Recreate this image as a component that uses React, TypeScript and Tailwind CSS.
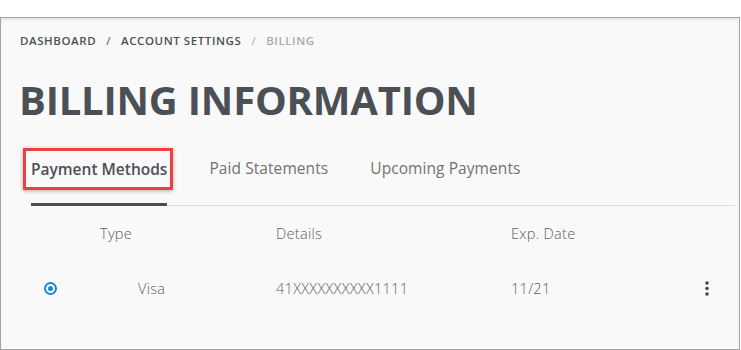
const font = { fontFamily: '"Open Sans", "DejaVu Sans", sans-serif' };

export default function App() {
  return (
    <div className="h-[350px] w-[741px] bg-white pt-[17px]" style={font}>
      <div className="h-[333px] w-[740px] border border-[#a3a3a3] bg-[#f9f9f9] shadow-[inset_0_3px_4px_-2px_rgba(0,0,0,0.12)]">
        {/* Breadcrumb */}
        <nav className="flex items-center pl-[19px] pt-[14px] text-[11.5px] font-semibold leading-[17px] tracking-[0.05em] text-[#4b5057]">
          <span>DASHBOARD</span>
          <span className="mx-[10px] font-normal">/</span>
          <span>ACCOUNT SETTINGS</span>
          <span className="ml-[10px] mr-[10px] font-normal text-[#aaaaaa]">/</span>
          <span className="text-[#aaaaaa]">BILLING</span>
        </nav>

        <h1 className="mt-[31px] pl-[18px] text-[40px] font-bold leading-[40px] tracking-[-0.005em] text-[#4b5057]">
          BILLING INFORMATION
        </h1>

        {/* Tabs */}
        <div className="ml-[30px] mr-[4px] mt-[30px] flex border-b border-[#dddddd]">
          <div className="relative -mb-px border-b-[3px] border-[#4b5057] pb-[22px] pt-[7px]">
            <span className="text-[15.5px] font-semibold leading-[23px] text-[#4b5057]">Payment Methods</span>
            <div className="absolute -left-[8px] -right-[6px] -top-[2px] bottom-[13px] border-[3px] border-[#ef4040] shadow-[0_1px_4px_rgba(0,0,0,0.3)]" />
          </div>
          <div className="ml-[42px] pt-[7px] text-[15.5px] leading-[23px] tracking-[0.005em] text-[#727272]">Paid Statements</div>
          <div className="ml-[42px] pt-[7px] text-[15.5px] leading-[23px] tracking-[0.005em] text-[#727272]">Upcoming Payments</div>
        </div>

        {/* Table */}
        <div className="ml-[29px] grid grid-cols-[70px_176px_235px_190px_12px] text-[14.5px] font-light leading-[21px] tracking-[0.02em] text-[#606060]">
          <div className="pt-[17px]" />
          <div className="pt-[17px]">Type</div>
          <div className="pt-[17px]">Details</div>
          <div className="pt-[17px]">Exp. Date</div>
          <div className="pt-[17px]" />

          <div className="flex items-center pl-[14px] pt-[34px]">
            <span className="flex h-[13px] w-[13px] items-center justify-center rounded-full border-[2.5px] border-[#1788d6]">
              <span className="h-[5px] w-[5px] rounded-full bg-[#1788d6]" />
            </span>
          </div>
          <div className="pl-[38px] pt-[34px]">Visa</div>
          <div className="pt-[34px]">41XXXXXXXXXX1111</div>
          <div className="pt-[34px]">11/21</div>
          <div className="flex items-center justify-center pt-[34px]">
            <svg width="4" height="15" viewBox="0 0 4 15" fill="#45494f">
              <circle cx="2" cy="2" r="1.8" />
              <circle cx="2" cy="7.5" r="1.8" />
              <circle cx="2" cy="13" r="1.8" />
            </svg>
          </div>
        </div>
      </div>
    </div>
  );
}
